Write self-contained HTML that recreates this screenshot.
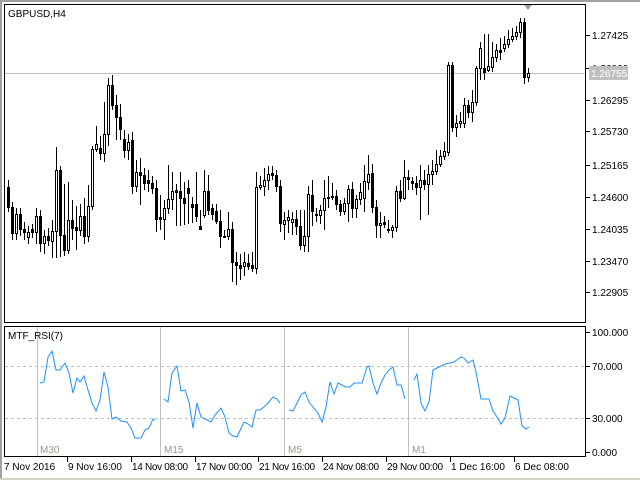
<!DOCTYPE html>
<html><head><meta charset="utf-8"><style>
html,body{margin:0;padding:0;background:#fff;width:640px;height:480px;overflow:hidden}
svg{display:block}
text{font-family:"Liberation Sans","DejaVu Sans",sans-serif;font-size:10px;fill:#000}
</style></head><body>
<svg width="640" height="480" viewBox="0 0 640 480" shape-rendering="crispEdges">
<rect x="0" y="0" width="640" height="480" fill="#fff"/>
<rect x="0" y="0" width="640" height="2" fill="#a0a0a0"/>
<rect x="0" y="0" width="2" height="480" fill="#a0a0a0"/>
<rect x="0" y="478" width="640" height="2" fill="#d4d0c8"/>
<rect x="4.5" y="4.5" width="581" height="318" fill="#fff" stroke="#000"/>
<line x1="5" y1="73.5" x2="585" y2="73.5" stroke="#c0c0c0"/>
<polygon points="524,5 532,5 528,10" fill="#a0a0a0"/>
<text x="8" y="17">GBPUSD,H4</text>
<g stroke="#000">
<line x1="586" y1="35.5" x2="590" y2="35.5"/><line x1="586" y1="68.5" x2="590" y2="68.5"/>
<line x1="586" y1="100.5" x2="590" y2="100.5"/><line x1="586" y1="131.5" x2="590" y2="131.5"/>
<line x1="586" y1="165.5" x2="590" y2="165.5"/><line x1="586" y1="197.5" x2="590" y2="197.5"/>
<line x1="586" y1="229.5" x2="590" y2="229.5"/><line x1="586" y1="261.5" x2="590" y2="261.5"/>
<line x1="586" y1="292.5" x2="590" y2="292.5"/>
</g>
<text x="592" y="39">1.27425</text>
<text x="592" y="72">1.26860</text>
<rect x="589" y="66" width="39" height="14" fill="#c0c0c0"/>
<text x="591" y="77" style="fill:#fff">1.26755</text>
<text x="592" y="104">1.26295</text>
<text x="592" y="135">1.25730</text>
<text x="592" y="169">1.25165</text>
<text x="592" y="201">1.24600</text>
<text x="592" y="233">1.24035</text>
<text x="592" y="265">1.23470</text>
<text x="592" y="296">1.22905</text>
<path stroke="#000" fill="none" d="M8.5 180V212 M12.5 202V240 M16.5 208V240 M20.5 208V236 M24.5 222V240 M28.5 226V244 M32.5 224V238 M36.5 208V244 M40.5 210V252 M44.5 230V254 M48.5 228V246 M52.5 220V258 M56.5 147V258 M60.5 166V257 M64.5 184V256 M68.5 182V254 M72.5 200V240 M76.5 206V250 M80.5 204V236 M84.5 198V244 M88.5 185V242 M92.5 146V210 M96.5 126V152 M100.5 136V160 M104.5 102V162 M108.5 78V146 M112.5 75V110 M116.5 95V140 M120.5 104V140 M124.5 130V158 M128.5 134V160 M132.5 132V194 M136.5 160V192 M140.5 158V205 M144.5 168V190 M148.5 170V192 M152.5 176V194 M156.5 180V232 M160.5 195V230 M164.5 200V240 M168.5 165V214 M172.5 172V210 M176.5 184V226 M180.5 172V226 M184.5 182V225 M188.5 180V224 M192.5 197V223 M196.5 172V222 M200.5 210V230 M204.5 170V218 M208.5 175V215 M212.5 204V220 M216.5 204V224 M220.5 210V248 M224.5 230V238 M228.5 212V240 M232.5 222V282 M236.5 252V285 M240.5 254V280 M244.5 252V276 M248.5 254V270 M252.5 252V272 M256.5 172V274 M260.5 176V190 M264.5 168V196 M268.5 166V190 M272.5 166V180 M276.5 170V192 M280.5 180V232 M284.5 212V240 M288.5 210V233 M292.5 212V235 M296.5 210V235 M300.5 210V250 M304.5 210V252 M308.5 186V252 M312.5 180V226 M316.5 208V222 M320.5 205V224 M324.5 180V230 M328.5 176V208 M332.5 183V200 M336.5 190V210 M340.5 200V216 M344.5 198V215 M348.5 185V222 M352.5 182V218 M356.5 195V218 M360.5 183V205 M364.5 165V212 M368.5 155V190 M372.5 164V213 M376.5 200V238 M380.5 212V238 M384.5 216V228 M388.5 220V233 M392.5 225V238 M396.5 186V232 M400.5 180V202 M404.5 160V200 M408.5 170V190 M412.5 177V190 M416.5 176V195 M420.5 165V220 M424.5 170V190 M428.5 165V215 M432.5 160V185 M436.5 150V175 M440.5 150V167 M444.5 142V160 M448.5 62V156 M452.5 62V132 M456.5 115V137 M460.5 112V128 M464.5 98V128 M468.5 100V118 M472.5 90V122 M476.5 66V106 M480.5 42V80 M484.5 34V80 M488.5 34V72 M492.5 42V72 M496.5 44V62 M500.5 38V60 M504.5 36V52 M508.5 30V48 M512.5 28V42 M516.5 26V40 M520.5 18V38 M524.5 18V84 M528.5 68V82"/>
<g fill="#000">
<rect x="7" y="187" width="3" height="21"/><rect x="11" y="207" width="3" height="27"/><rect x="19" y="214" width="3" height="16"/><rect x="23" y="229" width="3" height="4"/><rect x="31" y="229" width="3" height="4"/><rect x="39" y="216" width="3" height="28"/><rect x="47" y="236" width="3" height="5"/><rect x="59" y="170" width="3" height="66"/><rect x="63" y="235" width="3" height="16"/><rect x="71" y="220" width="3" height="9"/><rect x="75" y="227" width="3" height="4"/><rect x="83" y="216" width="3" height="21"/><rect x="99" y="148" width="3" height="6"/><rect x="111" y="85" width="3" height="21"/><rect x="115" y="105" width="3" height="13"/><rect x="119" y="117" width="3" height="13"/><rect x="123" y="139" width="3" height="12"/><rect x="131" y="140" width="3" height="47"/><rect x="139" y="172" width="3" height="4"/><rect x="143" y="175" width="3" height="9"/><rect x="147" y="180" width="3" height="4"/><rect x="151" y="183" width="3" height="6"/><rect x="155" y="188" width="3" height="32"/><rect x="159" y="217" width="3" height="3"/><rect x="175" y="190" width="3" height="3"/><rect x="179" y="191" width="3" height="8"/><rect x="183" y="198" width="3" height="6"/><rect x="187" y="188" width="3" height="6"/><rect x="191" y="204" width="3" height="4"/><rect x="195" y="204" width="3" height="13"/><rect x="199" y="226" width="3" height="4"/><rect x="207" y="191" width="3" height="20"/><rect x="211" y="208" width="3" height="7"/><rect x="215" y="211" width="3" height="11"/><rect x="219" y="221" width="3" height="16"/><rect x="223" y="236" width="3" height="2"/><rect x="231" y="229" width="3" height="34"/><rect x="235" y="262" width="3" height="4"/><rect x="239" y="265" width="3" height="4"/><rect x="247" y="263" width="3" height="4"/><rect x="251" y="265" width="3" height="4"/><rect x="271" y="173" width="3" height="3"/><rect x="275" y="175" width="3" height="12"/><rect x="279" y="186" width="3" height="38"/><rect x="295" y="219" width="3" height="8"/><rect x="299" y="226" width="3" height="20"/><rect x="311" y="195" width="3" height="17"/><rect x="315" y="214" width="3" height="2"/><rect x="327" y="197" width="3" height="2"/><rect x="331" y="196" width="3" height="2"/><rect x="335" y="196" width="3" height="9"/><rect x="339" y="204" width="3" height="8"/><rect x="351" y="189" width="3" height="20"/><rect x="371" y="173" width="3" height="35"/><rect x="375" y="207" width="3" height="19"/><rect x="383" y="222" width="3" height="3"/><rect x="387" y="229" width="3" height="2"/><rect x="399" y="191" width="3" height="8"/><rect x="407" y="177" width="3" height="3"/><rect x="411" y="181" width="3" height="3"/><rect x="415" y="183" width="3" height="5"/><rect x="423" y="180" width="3" height="5"/><rect x="451" y="65" width="3" height="63"/><rect x="467" y="105" width="3" height="8"/><rect x="483" y="68" width="3" height="5"/><rect x="499" y="50" width="3" height="3"/><rect x="523" y="22" width="3" height="56"/>
</g>
<g fill="#fff" stroke="#000">
<rect x="15.5" y="214.5" width="2" height="19"/><rect x="27.5" y="232.5" width="2" height="5"/><rect x="35.5" y="216.5" width="2" height="16"/><rect x="43.5" y="236.5" width="2" height="7"/><rect x="51.5" y="231.5" width="2" height="10"/><rect x="55.5" y="170.5" width="2" height="61"/><rect x="67.5" y="220.5" width="2" height="30"/><rect x="79.5" y="216.5" width="2" height="14"/><rect x="87.5" y="206.5" width="2" height="30"/><rect x="91.5" y="149.5" width="2" height="57"/><rect x="95.5" y="144.5" width="2" height="5"/><rect x="103.5" y="134.5" width="2" height="19"/><rect x="107.5" y="85.5" width="2" height="49"/><rect x="127.5" y="142.5" width="2" height="8"/><rect x="135.5" y="172.5" width="2" height="14"/><rect x="163.5" y="208.5" width="2" height="11"/><rect x="167.5" y="199.5" width="2" height="9"/><rect x="171.5" y="191.5" width="2" height="8"/><rect x="203.5" y="191.5" width="2" height="24"/><rect x="227.5" y="229.5" width="2" height="7"/><rect x="243.5" y="262.5" width="2" height="4"/><rect x="255.5" y="187.5" width="2" height="81"/><rect x="259.5" y="185.5" width="2" height="2"/><rect x="263.5" y="180.5" width="2" height="6"/><rect x="267.5" y="174.5" width="2" height="6"/><rect x="283.5" y="220.5" width="2" height="4"/><rect x="287.5" y="217.5" width="2" height="3"/><rect x="291.5" y="219.5" width="2" height="3"/><rect x="303.5" y="236.5" width="2" height="9"/><rect x="307.5" y="194.5" width="2" height="42"/><rect x="319.5" y="210.5" width="2" height="5"/><rect x="323.5" y="198.5" width="2" height="12"/><rect x="343.5" y="203.5" width="2" height="8"/><rect x="347.5" y="189.5" width="2" height="14"/><rect x="355.5" y="199.5" width="2" height="9"/><rect x="359.5" y="192.5" width="2" height="7"/><rect x="363.5" y="181.5" width="2" height="17"/><rect x="367.5" y="174.5" width="2" height="8"/><rect x="379.5" y="223.5" width="2" height="2"/><rect x="391.5" y="227.5" width="2" height="3"/><rect x="395.5" y="191.5" width="2" height="36"/><rect x="403.5" y="177.5" width="2" height="21"/><rect x="419.5" y="180.5" width="2" height="7"/><rect x="427.5" y="174.5" width="2" height="10"/><rect x="431.5" y="171.5" width="2" height="3"/><rect x="435.5" y="164.5" width="2" height="7"/><rect x="439.5" y="156.5" width="2" height="8"/><rect x="443.5" y="151.5" width="2" height="5"/><rect x="447.5" y="65.5" width="2" height="87"/><rect x="455.5" y="123.5" width="2" height="4"/><rect x="459.5" y="121.5" width="2" height="2"/><rect x="463.5" y="105.5" width="2" height="18"/><rect x="471.5" y="102.5" width="2" height="10"/><rect x="475.5" y="68.5" width="2" height="34"/><rect x="479.5" y="48.5" width="2" height="20"/><rect x="487.5" y="66.5" width="2" height="4"/><rect x="491.5" y="57.5" width="2" height="10"/><rect x="495.5" y="50.5" width="2" height="7"/><rect x="503.5" y="44.5" width="2" height="4"/><rect x="507.5" y="39.5" width="2" height="5"/><rect x="511.5" y="36.5" width="2" height="3"/><rect x="515.5" y="32.5" width="2" height="4"/><rect x="519.5" y="22.5" width="2" height="10"/><rect x="527.5" y="73.5" width="2" height="4"/>
</g>
<rect x="4.5" y="326.5" width="581" height="130" fill="#fff" stroke="#000"/>
<g stroke="#c0c0c0" stroke-dasharray="3,3">
<line x1="5" y1="366.5" x2="585" y2="366.5"/><line x1="5" y1="418.5" x2="585" y2="418.5"/>
</g>
<g stroke="#c0c0c0">
<line x1="37.5" y1="327" x2="37.5" y2="456"/><line x1="160.5" y1="327" x2="160.5" y2="456"/>
<line x1="284.5" y1="327" x2="284.5" y2="456"/><line x1="408.5" y1="327" x2="408.5" y2="456"/>
</g>
<text x="8" y="339">MTF_RSI(7)</text>
<text x="40" y="453" style="fill:#a09888">M30</text>
<text x="164" y="453" style="fill:#a09888">M15</text>
<text x="288" y="453" style="fill:#a09888">M5</text>
<text x="412" y="453" style="fill:#a09888">M1</text>
<g fill="none" stroke="#1e90ff" shape-rendering="auto">
<polyline points="40,383 44,382 48,357 52,351 56,370 60,370 65,363 69,373 73,393 77,378 80,382 84,376 88,390 92,403 96,411 100,400 104,372 108,387 112,419 116,417 121,421 127,422 131,428 135,438 141,438 145,430 149,428 153,419 155,420"/>
<polyline points="164,399 168,402 172,373 177,366 181,391 185,390 189,402 193,428 197,403 201,417 205,419 211,422 215,415 221,408 225,417 229,433 233,436 237,437 244,422 248,424 252,427 256,410 260,410 264,407 268,403 273,397 277,399 280,403"/>
<polyline points="289,410 293,411 297,403 301,395 305,392 309,402 313,407 318,413 322,422 326,407 330,382 334,394 338,383 342,385 346,387 350,387 354,383 358,383 362,383 367,367 369,366 373,383 377,394 381,383 385,375 389,370 393,367 397,385 401,385 405,399"/>
<polyline points="414,380 417,374 421,403 425,411 429,402 433,370 437,368 441,366 445,364 450,363 454,362 461,357 464,358 468,363 473,360 476,372 481,399 489,399 493,411 497,417 501,424 505,418 510,396 514,398 518,400 522,426 526,429 529,427"/>
</g>
<g stroke="#000">
<line x1="586" y1="332.5" x2="590" y2="332.5"/><line x1="586" y1="366.5" x2="590" y2="366.5"/>
<line x1="586" y1="418.5" x2="590" y2="418.5"/><line x1="586" y1="452.5" x2="590" y2="452.5"/>
</g>
<text x="592" y="336">100.000</text>
<text x="592" y="370">70.000</text>
<text x="592" y="422">30.000</text>
<text x="592" y="456">0.000</text>
<g stroke="#000">
<line x1="67.5" y1="457" x2="67.5" y2="462"/><line x1="131.5" y1="457" x2="131.5" y2="462"/>
<line x1="195.5" y1="457" x2="195.5" y2="462"/><line x1="258.5" y1="457" x2="258.5" y2="462"/>
<line x1="322.5" y1="457" x2="322.5" y2="462"/><line x1="386.5" y1="457" x2="386.5" y2="462"/>
<line x1="450.5" y1="457" x2="450.5" y2="462"/><line x1="514.5" y1="457" x2="514.5" y2="462"/>
</g>
<text x="4" y="470">7 Nov 2016</text>
<text x="68" y="470">9 Nov 16:00</text>
<text x="132" y="470" textLength="56">14 Nov 08:00</text>
<text x="196" y="470" textLength="56">17 Nov 00:00</text>
<text x="259" y="470" textLength="56">21 Nov 16:00</text>
<text x="323" y="470" textLength="56">24 Nov 08:00</text>
<text x="387" y="470" textLength="56">29 Nov 00:00</text>
<text x="451" y="470">1 Dec 16:00</text>
<text x="515" y="470">6 Dec 08:00</text>
</svg>
</body></html>
